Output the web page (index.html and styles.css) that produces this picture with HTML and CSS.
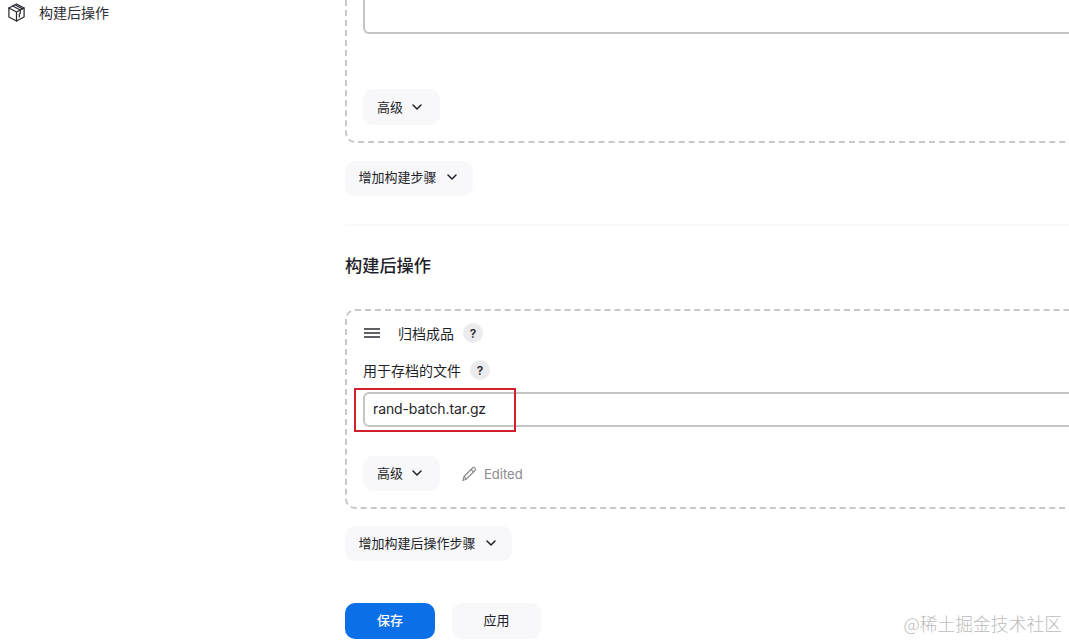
FILE: index.html
```html
<!DOCTYPE html>
<html lang="zh">
<head>
<meta charset="utf-8">
<title>构建后操作</title>
<link rel="stylesheet" href="styles.css">
</head>
<body>
<div class="page">
  <aside class="sidebar">
    <div class="side-item">
      <svg class="side-icon" viewBox="0 0 20 20" fill="none" stroke="#2b2b33" stroke-width="1.300" stroke-linejoin="round" stroke-linecap="round"><path d="M10 1 18 5.200v9.600L10 19 2 14.800V5.200Z"/><path d="M2 5.200 10 9.500 18 5.200M10 9.500V19"/><path d="M6 3.100 14 7.400v3.600M8.500 1.900 16.300 6.200"/><path d="M13 11.500v3.200"/></svg>
      <span>构建后操作</span>
    </div>
  </aside>
  <main class="main">
    <section class="card card-top">
      <div class="textarea"></div>
      <button class="btn btn-adv">高级<svg class="chev" viewBox="0 0 12 12"><path d="M2 4l4 4 4-4"/></svg></button>
    </section>
    <button class="btn btn-add">增加构建步骤<svg class="chev" viewBox="0 0 12 12"><path d="M2 4l4 4 4-4"/></svg></button>
    <div class="sep"></div>
    <h2 class="heading">构建后操作</h2>
    <section class="card card-post">
      <div class="card-head">
        <svg class="drag" viewBox="0 0 16 10"><path d="M0 1h16M0 5h16M0 9h16"/></svg>
        <span class="card-title">归档成品</span>
        <span class="help">?</span>
      </div>
      <div class="label-row">
        <span>用于存档的文件</span>
        <span class="help">?</span>
      </div>
      <div class="field">
        <div class="input">rand-batch.tar.gz</div>
        <div class="highlight"></div>
      </div>
      <div class="adv-row">
        <button class="btn btn-adv">高级<svg class="chev" viewBox="0 0 12 12"><path d="M2 4l4 4 4-4"/></svg></button>
        <span class="edited">
          <svg class="pencil" viewBox="0 0 16 16" fill="none" stroke="#8a8a90" stroke-width="1.100" stroke-linejoin="round"><path d="M2 14.500 3 10.500 11.500 2c.8-.8 1.800-.8 2.500 0s.8 1.700 0 2.500L5.500 13Z"/><path d="M10 3.500l2.500 2.500M3 10.500 5.500 13"/></svg>
          Edited
        </span>
      </div>
    </section>
    <button class="btn btn-add btn-add-post">增加构建后操作步骤<svg class="chev" viewBox="0 0 12 12"><path d="M2 4l4 4 4-4"/></svg></button>
    <div class="actions">
      <button class="btn btn-save">保存</button>
      <button class="btn btn-apply">应用</button>
    </div>
  </main>
</div>
<div class="watermark">@稀土掘金技术社区</div>
</body>
</html>
```
FILE: styles.css
```css
html, body {
  margin: 0;
  height: 640px;
  overflow: hidden;
  background: #fff;
}
body {
  position: relative;
  font-family: Inter, "Noto Sans CJK SC", sans-serif;
  font-size: 14px;
  color: #1f1f29;
}
.page {
  display: flex;
  width: 1200px;
}
.sidebar {
  width: 345px;
  flex: none;
}
.side-item {
  display: flex;
  align-items: center;
  gap: 13px;
  padding: 3px 0 0 7px;
  height: 18px;
  color: #2b2b33;
}
.side-icon {
  width: 19px;
  height: 19px;
}
.main {
  width: 800px;
  display: flex;
  flex-direction: column;
  align-items: flex-start;
}
.card {
  box-sizing: border-box;
  width: 100%;
  border: 2px dashed #c8c8ca;
  border-radius: 10px;
  padding: 0 16px;
}
.card-top {
  margin-top: -30px;
  height: 173px;
  display: flex;
  flex-direction: column;
  align-items: flex-start;
  border-top: none;
}
.textarea {
  box-sizing: border-box;
  width: 100%;
  height: 64px;
  border: 2px solid #c4c4c6;
  border-top: none;
  border-radius: 0 0 6px 6px;
  margin-bottom: 55px;
}
.btn {
  font-family: inherit;
  font-size: 13px;
  line-height: 16px;
  color: #1f1f29;
  border: none;
  background: #f8f8fa;
  border-radius: 10px;
  display: inline-flex;
  align-items: center;
  justify-content: center;
  padding: 0 0 2px;
}
.btn-adv {
  width: 77px;
  height: 36px;
  gap: 8px;
  padding-right: 3px;
  padding-bottom: 1px;
}
.adv-row .btn-adv {
  height: 35px;
}
.btn-add {
  width: 128px;
  height: 35px;
  gap: 9px;
  margin-top: 18px;
  padding-right: 2px;
  padding-bottom: 3px;
}
.chev {
  width: 12px;
  height: 12px;
  fill: none;
  stroke: #1f1f29;
  stroke-width: 1.500;
  stroke-linecap: round;
  stroke-linejoin: round;
}
.sep {
  width: 100%;
  height: 2px;
  background: #fafafb;
  margin-top: 28px;
}
.heading {
  margin: 29px 0 30px;
  font-size: 17.200px;
  line-height: 24px;
  font-weight: 500;
  color: #1f1f29;
  position: relative;
  top: -1px;
}
.card-post {
  height: 200px;
  padding-top: 11px;
}
.card-head {
  display: flex;
  align-items: center;
  height: 22px;
}
.drag {
  width: 16px;
  height: 10px;
  fill: none;
  stroke: #2b2b33;
  stroke-width: 1.400;
  margin-left: 1px;
}
.card-title {
  margin-left: 18px;
}
.help {
  width: 20px;
  height: 20px;
  border-radius: 50%;
  background: #ececee;
  font-size: 12px;
  font-weight: 600;
  display: flex;
  align-items: center;
  justify-content: center;
  margin-left: 9px;
}
.label-row {
  display: flex;
  align-items: center;
  height: 22px;
  margin-top: 15px;
}
.field {
  position: relative;
  margin-top: 11px;
}
.input {
  box-sizing: border-box;
  height: 35px;
  border: 2px solid #c4c4c6;
  border-radius: 6px;
  padding-left: 8px;
  line-height: 30px;
  font-size: 14px;
  letter-spacing: -0.120px;
}
.highlight {
  position: absolute;
  left: -9px;
  top: -4px;
  box-sizing: content-box;
  width: 158px;
  height: 40px;
  border: 2px solid #d0202c;
}
.adv-row {
  display: flex;
  align-items: center;
  margin-top: 29px;
}
.edited {
  display: flex;
  align-items: center;
  gap: 7px;
  margin-left: 21px;
  font-size: 13px;
  color: #8a8a90;
}
.pencil {
  width: 16px;
  height: 16px;
}
.btn-add-post {
  width: 167px;
  margin-top: 17px;
  padding-bottom: 2px;
}
.actions {
  display: flex;
  gap: 17px;
  margin-top: 42px;
}
.btn-save {
  width: 90px;
  height: 36px;
  background: #0b6fe8;
  color: #fff;
  font-weight: 500;
}
.btn-apply {
  width: 89px;
  height: 36px;
}
.watermark {
  position: absolute;
  right: 7px;
  top: 611px;
  font-family: "Noto Sans CJK SC", sans-serif;
  font-size: 17.800px;
  line-height: 24px;
  color: #bcbcbc;
  font-weight: 300;
}
```
